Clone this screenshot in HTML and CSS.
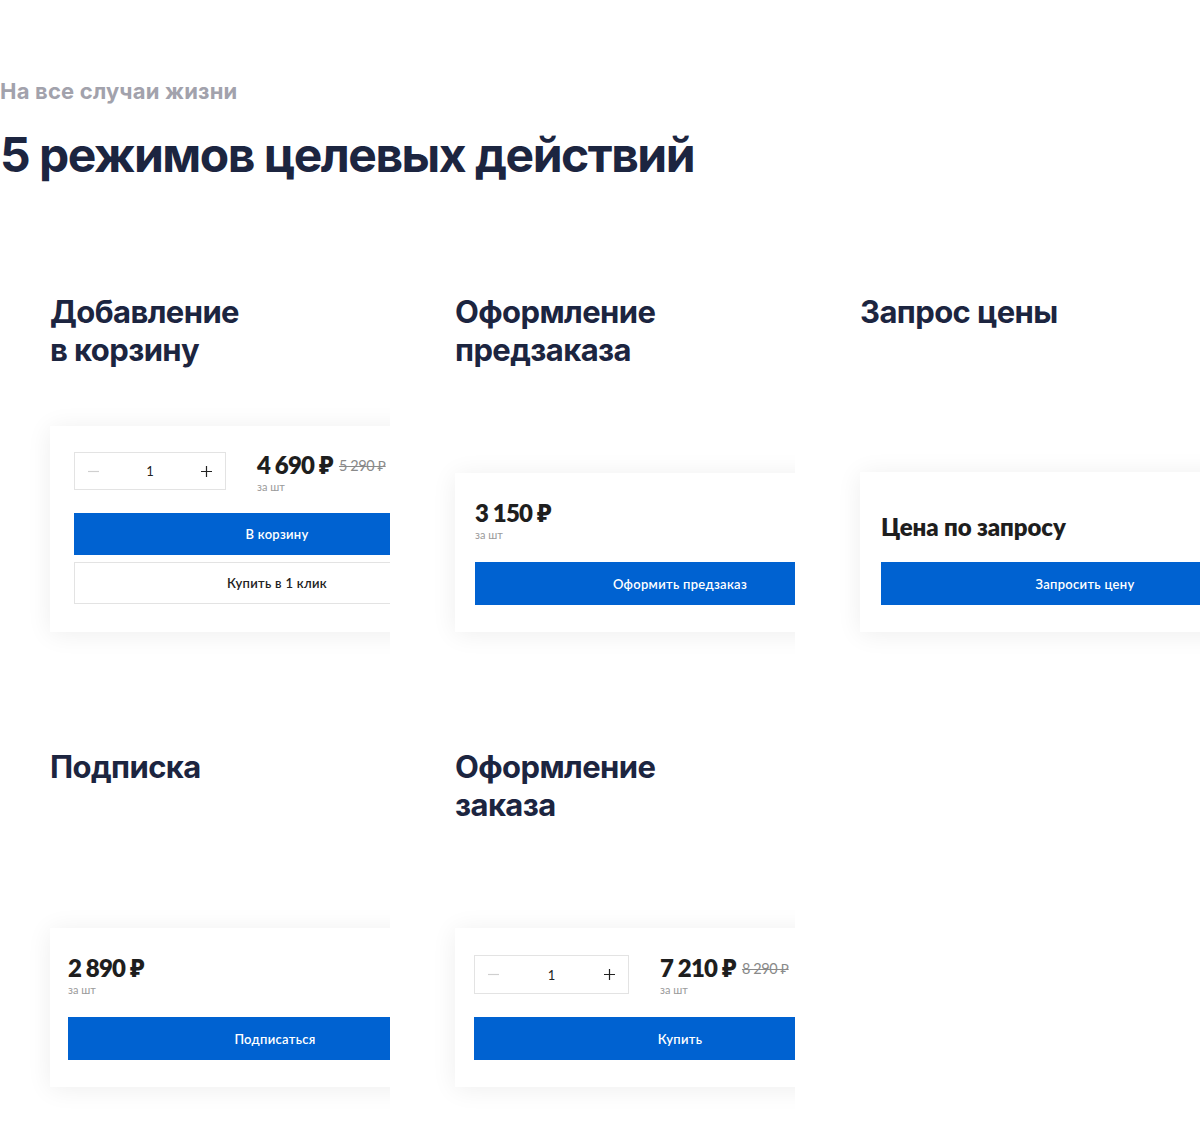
FILE: index.html
```html
<!DOCTYPE html>
<html lang="ru">
<head>
    <meta charset="UTF-8">
    <meta name="viewport" content="width=device-width, initial-scale=1.0">
    <title>5 режимов целевых действий</title>
    <link rel="stylesheet" href="styles.css">
</head>
<body>
<section class="modes">
    <p class="modes-kicker">На все случаи жизни</p>
    <h1 class="modes-title">5 режимов целевых действий</h1>

    <div class="modes-grid">
        <!-- обычная корзина -->
        <div class="mode">
            <h2 class="mode-name">Добавление<br>в корзину</h2>
            <div class="preview">
                <div class="card card--cart">
                    <div class="card-row">
                        <div class="qty">
                            <span class="qty-btn qty-btn--off">
                                <svg width="11" height="11" viewBox="0 0 11 11"><path d="M0 5.5h11" stroke="currentColor" stroke-width="1.2"/></svg>
                            </span>
                            <span class="qty-val">1</span>
                            <span class="qty-btn">
                                <svg width="11" height="11" viewBox="0 0 11 11"><path d="M0 5.5h11M5.5 0v11" stroke="currentColor" stroke-width="1.2"/></svg>
                            </span>
                        </div>
                        <div class="price">
                            <div class="price-line">
                                <span class="price-now">4 690 ₽</span>
                                <span class="price-old">5 290 ₽</span>
                            </div>
                            <div class="price-unit">за шт</div>
                        </div>
                    </div>
                    <button class="btn btn--primary">В корзину</button>
                    <button class="btn btn--outline">Купить в 1 клик</button>
                </div>
            </div>
        </div>

        <!-- предзаказ -->
        <div class="mode">
            <h2 class="mode-name">Оформление<br>предзаказа</h2>
            <div class="preview">
                <div class="card">
                    <div class="price">
                        <div class="price-line">
                            <span class="price-now">3 150 ₽</span>
                        </div>
                        <div class="price-unit">за шт</div>
                    </div>
                    <button class="btn btn--primary">Оформить предзаказ</button>
                </div>
            </div>
        </div>

        <!-- цена по запросу -->
        <div class="mode">
            <h2 class="mode-name">Запрос цены</h2>
            <div class="preview">
                <div class="card card--request">
                    <div class="price-request">Цена по запросу</div>
                    <button class="btn btn--primary">Запросить цену</button>
                </div>
            </div>
        </div>

        <!-- подписка -->
        <div class="mode">
            <h2 class="mode-name">Подписка</h2>
            <div class="preview">
                <div class="card card--sub">
                    <div class="price">
                        <div class="price-line">
                            <span class="price-now">2 890 ₽</span>
                        </div>
                        <div class="price-unit">за шт</div>
                    </div>
                    <button class="btn btn--primary">Подписаться</button>
                </div>
            </div>
        </div>

        <!-- заказ -->
        <div class="mode">
            <h2 class="mode-name">Оформление<br>заказа</h2>
            <div class="preview">
                <div class="card card--order">
                    <div class="card-row">
                        <div class="qty qty--wide">
                            <span class="qty-btn qty-btn--off">
                                <svg width="11" height="11" viewBox="0 0 11 11"><path d="M0 5.5h11" stroke="currentColor" stroke-width="1.2"/></svg>
                            </span>
                            <span class="qty-val">1</span>
                            <span class="qty-btn">
                                <svg width="11" height="11" viewBox="0 0 11 11"><path d="M0 5.5h11M5.5 0v11" stroke="currentColor" stroke-width="1.2"/></svg>
                            </span>
                        </div>
                        <div class="price">
                            <div class="price-line">
                                <span class="price-now">7 210 ₽</span>
                                <span class="price-old">8 290 ₽</span>
                            </div>
                            <div class="price-unit">за шт</div>
                        </div>
                    </div>
                    <button class="btn btn--primary">Купить</button>
                </div>
            </div>
        </div>
    </div>
</section>
</body>
</html>
```

FILE: styles.css
```css
body {
    margin: 0;
    background-color: #fff;
    font-family: Inter, 'Noto Sans', sans-serif;
}
.modes {
    padding: 76px 0 30px;
}
.modes-kicker {
    margin: 0;
    font-size: 22px;
    line-height: 30px;
    font-weight: 700;
    letter-spacing: 0.2px;
    color: #a2a2ac;
}
.modes-title {
    margin: 20px 0 0;
    font-size: 48px;
    line-height: 58px;
    font-weight: 700;
    letter-spacing: -1.5px;
    color: #1c2540;
}
.modes-grid {
    display: grid;
    grid-template-columns: repeat(3, 340px);
    grid-auto-rows: 339px;
    column-gap: 65px;
    row-gap: 116px;
    margin: 109px 0 0 50px;
}
.mode {
    display: flex;
    flex-direction: column;
}
.mode-name {
    margin: 0;
    font-size: 31px;
    line-height: 38px;
    font-weight: 700;
    letter-spacing: -0.6px;
    color: #1c2540;
}

/* карточка обрезана справа, тень видна с трёх сторон */
.preview {
    margin: auto 0 -24px -24px;
    padding: 24px 0 24px 24px;
    overflow: hidden;
}
.card {
    width: 450px;
    box-sizing: border-box;
    padding: 27px 20px 27px;
    background-color: #fff;
    box-shadow: 0 2px 24px rgba(0, 0, 0, 0.07);
    font-family: Lato, 'Noto Sans', sans-serif;
    color: #1e1e1e;
}
.card--cart {
    padding: 26px 20px 28px 24px;
}
.card--request {
    padding-left: 21px;
    padding-right: 21px;
}
.card--sub {
    padding-left: 18px;
    padding-right: 18px;
}
.card--order {
    padding-left: 19px;
    padding-right: 19px;
}
.card-row {
    display: flex;
    align-items: flex-start;
    gap: 31px;
    height: 38px;
}
.qty {
    display: flex;
    align-items: center;
    justify-content: space-between;
    flex: none;
    width: 152px;
    height: 38px;
    box-sizing: border-box;
    padding: 0 13px;
    border: 1px solid #e3e3e3;
}
.qty--wide {
    width: 155px;
    height: 39px;
}
.qty-btn {
    display: flex;
    color: #222;
}
.qty-btn--off {
    color: #cfcfcf;
}
.qty-val {
    font-size: 13px;
    color: #222;
}
.price-line {
    display: flex;
    align-items: center;
    gap: 6px;
    white-space: nowrap;
}
.price-now {
    font-size: 24px;
    line-height: 26px;
    font-weight: 800;
    letter-spacing: -0.8px;
}
.price-old {
    font-size: 14.5px;
    color: #8a8a8a;
    text-decoration: line-through;
    letter-spacing: -0.4px;
}
.price-unit {
    font-size: 11px;
    line-height: 12px;
    color: #9a9a9a;
    margin-top: 3px;
}
.price-request {
    margin: 14px 0 0;
    font-size: 24px;
    line-height: 28px;
    font-weight: 800;
    letter-spacing: -0.1px;
}
.btn {
    display: block;
    width: 100%;
    height: 43px;
    font-family: inherit;
    font-size: 13px;
    font-weight: 600;
    letter-spacing: 0.3px;
    cursor: pointer;
}
.btn--primary {
    margin-top: 21px;
    border: none;
    background-color: #0062d1;
    color: #fff;
}
.btn--outline {
    margin-top: 7px;
    height: 42px;
    border: 1px solid #e3e3e3;
    background-color: #fff;
    color: #222;
}
.card-row + .btn--primary {
    height: 42px;
    margin-top: 23px;
}
.card--order .card-row + .btn--primary {
    height: 43px;
    margin-top: 24px;
}
```
